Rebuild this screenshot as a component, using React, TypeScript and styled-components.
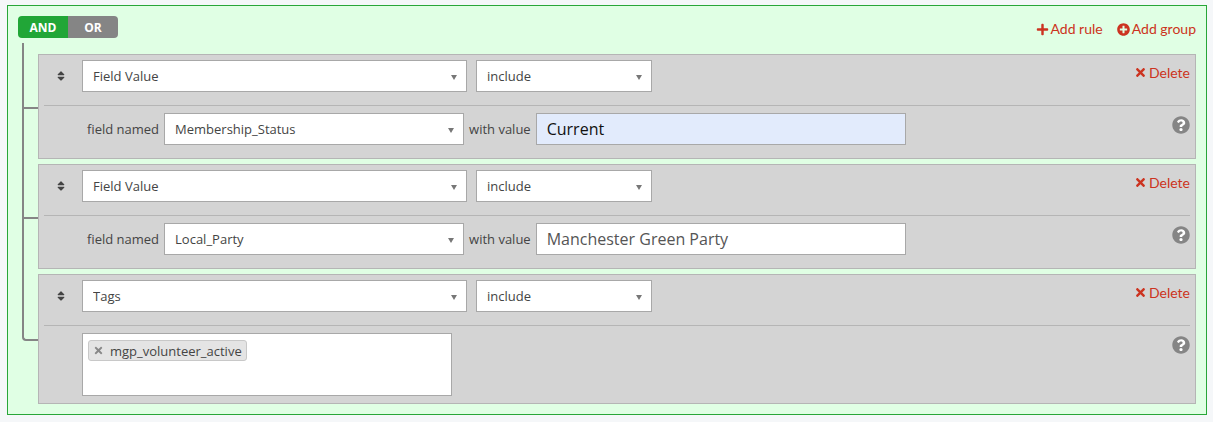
import { FaPlus, FaPlusCircle, FaQuestionCircle, FaSort, FaTimes } from "react-icons/fa";
import styled, { createGlobalStyle } from "styled-components";

const GlobalStyle = createGlobalStyle`
  html, body {
    margin: 0;
    padding: 0;
    background: #f5f7f9;
  }
  body {
    font-family: "Open Sans", sans-serif;
    color: #444;
  }
`;

const Page = styled.div`
  padding: 5px 6px 0 7px;
`;

const Group = styled.div`
  box-sizing: border-box;
  height: 410px;
  padding: 10px;
  background: #e0ffe4;
  border: 1px solid #28a638;
`;

const GroupHeader = styled.div`
  display: flex;
  justify-content: space-between;
  align-items: flex-start;
  height: 38px;
`;

const Toggle = styled.div`
  display: flex;
  width: 100px;
  height: 22px;
  border-radius: 4px;
  overflow: hidden;
`;

const ToggleButton = styled.div<{ $active?: boolean }>`
  flex: 1;
  display: flex;
  align-items: center;
  justify-content: center;
  font-size: 12px;
  font-weight: 700;
  color: #fff;
  background: ${(p) => (p.$active ? "#21a637" : "#858585")};
`;

const GroupActions = styled.div`
  display: flex;
  gap: 14px;
  margin-top: 5px;
`;

const ActionLink = styled.span`
  display: inline-flex;
  align-items: center;
  gap: 2px;
  font-family: Lato, sans-serif;
  font-size: 14px;
  line-height: 16px;
  color: #cc3320;
  svg {
    font-size: 13px;
  }
`;

const RuleList = styled.div`
  display: flex;
  flex-direction: column;
  gap: 5px;
  padding-left: 20px;
`;

// the bracket joining the rules: one stroke from above down to the middle of
// the rule, a second one from the middle on to the next rule
const Rule = styled.div<{ $first?: boolean; $last?: boolean }>`
  position: relative;
  box-sizing: border-box;
  padding: 5px 5px 7px 5px;
  background: #d4d4d4;
  border: 1px solid #b5b5b5;

  &::before {
    content: "";
    position: absolute;
    left: -17px;
    top: ${(p) => (p.$first ? "-12px" : "-6px")};
    width: 14px;
    height: calc(50% + ${(p) => (p.$first ? "12px" : "6px")});
    border-left: 2px solid #858585;
    border-bottom: 2px solid #858585;
    border-bottom-left-radius: ${(p) => (p.$last ? "4px" : "0")};
  }
  &::after {
    content: "";
    display: ${(p) => (p.$last ? "none" : "block")};
    position: absolute;
    left: -17px;
    top: 50%;
    bottom: -6px;
    border-left: 2px solid #858585;
  }
`;

const RuleHeader = styled.div`
  display: flex;
  align-items: flex-start;
  height: 45px;
  border-bottom: 1px solid #b5b5b5;
`;

const DragHandle = styled.div`
  box-sizing: border-box;
  display: flex;
  align-items: center;
  width: 38px;
  height: 32px;
  padding-left: 11px;
  font-size: 12px;
  color: #444;
`;

const SelectWrap = styled.div<{ $width: number }>`
  position: relative;
  width: ${(p) => p.$width}px;
  height: 32px;
  margin-right: 9px;

  &::after {
    content: "";
    position: absolute;
    right: 10px;
    top: 15px;
    border-left: 3px solid transparent;
    border-right: 3px solid transparent;
    border-top: 5px solid #777;
    pointer-events: none;
  }
`;

const Select = styled.select`
  appearance: none;
  box-sizing: border-box;
  display: block;
  width: 100%;
  height: 100%;
  margin: 0;
  padding: 0 20px 0 10px;
  background: #fff;
  border: 1px solid #a8a8a8;
  border-radius: 0;
  font-family: "Open Sans", sans-serif;
  font-size: 13px;
  color: #444;
`;

const DeleteSlot = styled.div`
  margin-left: auto;
  margin-top: 2px;
`;

const RuleBody = styled.div`
  position: relative;
  display: flex;
  align-items: center;
  padding: 7px 0 6px 43px;
`;

const TagRuleBody = styled(RuleBody)`
  padding: 7px 0 0 38px;
`;

const Label = styled.span`
  font-size: 13px;
  color: #444;
  white-space: nowrap;
`;

const NamedLabel = styled(Label)`
  margin-right: 5px;
`;

const ValueLabel = styled(Label)`
  margin: 0 5px 0 -4px;
`;

const ValueInput = styled.input<{ $filled?: boolean }>`
  box-sizing: border-box;
  width: 370px;
  height: 32px;
  padding: 0 10px;
  background: ${(p) => (p.$filled ? "#e2ebfc" : "#fff")};
  border: 1px solid #a8a8a8;
  font-family: "Open Sans", sans-serif;
  font-size: 16px;
  color: ${(p) => (p.$filled ? "#111" : "#555")};
  outline: none;
`;

const TagBox = styled.div`
  box-sizing: border-box;
  width: 370px;
  height: 63px;
  padding: 5px;
  background: #fff;
  border: 1px solid #a8a8a8;
`;

const Tag = styled.span`
  box-sizing: border-box;
  display: inline-flex;
  align-items: center;
  gap: 6px;
  height: 21px;
  padding: 0 4px;
  background: #e4e4e4;
  border: 1px solid #c8c8c8;
  border-radius: 3px;
  font-size: 13px;
  color: #444;
  svg {
    font-size: 11px;
    color: #888;
  }
`;

const HelpIcon = styled.div`
  position: absolute;
  right: 0;
  top: 10px;
  font-size: 18px;
  line-height: 18px;
  color: #858585;
  background: linear-gradient(#fff, #fff) center / 8px 12px no-repeat;
  border-radius: 50%;
  svg {
    display: block;
  }
`;

const FieldSelect = ({ value, width }: { value: string; width: number }) => (
  <SelectWrap $width={width}>
    <Select defaultValue={value}>
      <option>{value}</option>
    </Select>
  </SelectWrap>
);

const RuleTop = ({ type }: { type: string }) => (
  <RuleHeader>
    <DragHandle>
      <FaSort />
    </DragHandle>
    <FieldSelect value={type} width={385} />
    <FieldSelect value="include" width={176} />
    <DeleteSlot>
      <ActionLink>
        <FaTimes />
        Delete
      </ActionLink>
    </DeleteSlot>
  </RuleHeader>
);

type FieldRuleProps = { field: string; value: string; filled?: boolean; first?: boolean };

const FieldRule = ({ field, value, filled, first }: FieldRuleProps) => (
  <Rule $first={first}>
    <RuleTop type="Field Value" />
    <RuleBody>
      <NamedLabel>field named</NamedLabel>
      <FieldSelect value={field} width={300} />
      <ValueLabel>with value</ValueLabel>
      <ValueInput $filled={filled} defaultValue={value} />
      <HelpIcon>
        <FaQuestionCircle />
      </HelpIcon>
    </RuleBody>
  </Rule>
);

export default function App() {
  return (
    <>
      <GlobalStyle />
      <Page>
        <Group>
          <GroupHeader>
            <Toggle>
              <ToggleButton $active>AND</ToggleButton>
              <ToggleButton>OR</ToggleButton>
            </Toggle>
            <GroupActions>
              <ActionLink>
                <FaPlus />
                Add rule
              </ActionLink>
              <ActionLink>
                <FaPlusCircle />
                Add group
              </ActionLink>
            </GroupActions>
          </GroupHeader>
          <RuleList>
            <FieldRule first field="Membership_Status" value="Current" filled />
            <FieldRule field="Local_Party" value="Manchester Green Party" />
            <Rule $last>
              <RuleTop type="Tags" />
              <TagRuleBody>
                <TagBox>
                  <Tag>
                    <FaTimes />
                    mgp_volunteer_active
                  </Tag>
                </TagBox>
                <HelpIcon>
                  <FaQuestionCircle />
                </HelpIcon>
              </TagRuleBody>
            </Rule>
          </RuleList>
        </Group>
      </Page>
    </>
  );
}
